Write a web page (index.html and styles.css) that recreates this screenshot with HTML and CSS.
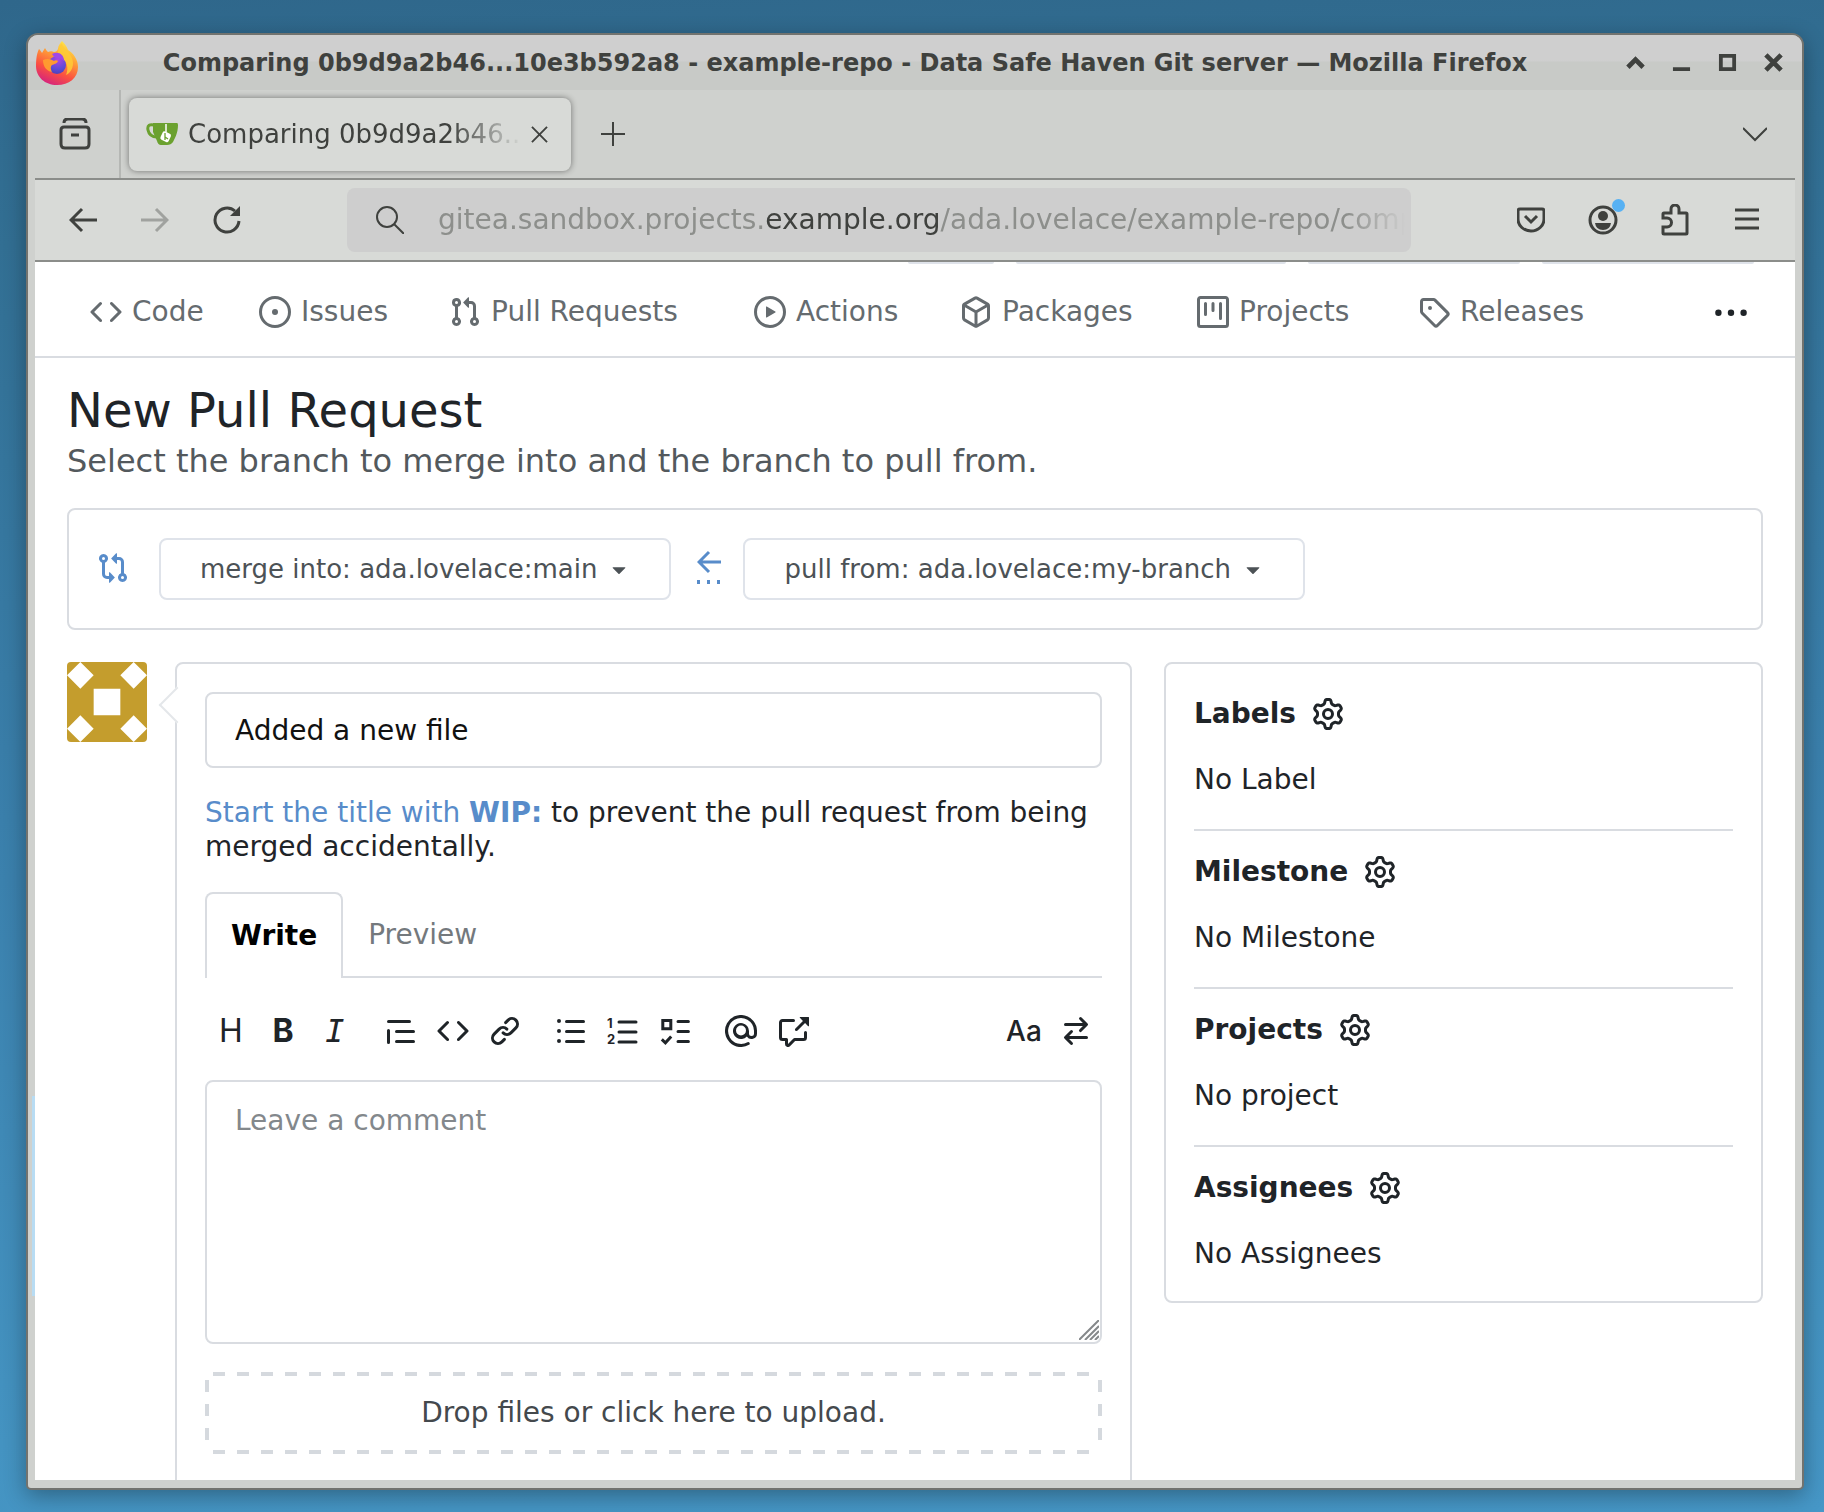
FILE: index.html
```html
<!DOCTYPE html>
<html lang="en">
<head>
<meta charset="utf-8">
<title>Comparing 0b9d9a2b46...10e3b592a8 - example-repo - Data Safe Haven Git server</title>
<link rel="stylesheet" href="styles.css">
</head>
<body>
<svg class="sprite" aria-hidden="true">
  <symbol id="code" viewBox="0 0 16 16"><path d="m11.28 3.22 4.25 4.25a.75.75 0 0 1 0 1.06l-4.25 4.25a.749.749 0 0 1-1.275-.326.749.749 0 0 1 .215-.734L13.94 8l-3.72-3.72a.749.749 0 0 1 .326-1.275.749.749 0 0 1 .734.215Zm-6.56 0a.751.751 0 0 1 1.042.018.751.751 0 0 1 .018 1.042L2.06 8l3.72 3.72a.749.749 0 0 1-.326 1.275.749.749 0 0 1-.734-.215L.47 8.53a.75.75 0 0 1 0-1.06Z"/></symbol>
  <symbol id="issue" viewBox="0 0 16 16"><path d="M8 9.5a1.5 1.5 0 1 0 0-3 1.5 1.5 0 0 0 0 3Z"/><path d="M8 0a8 8 0 1 1 0 16A8 8 0 0 1 8 0ZM1.5 8a6.5 6.5 0 1 0 13 0 6.5 6.5 0 0 0-13 0Z"/></symbol>
  <symbol id="pull" viewBox="0 0 16 16"><path d="M1.5 3.25a2.25 2.25 0 1 1 3 2.122v5.256a2.251 2.251 0 1 1-1.5 0V5.372A2.25 2.25 0 0 1 1.5 3.25Zm5.677-.177L9.573.677A.25.25 0 0 1 10 .854V2.5h1A2.5 2.5 0 0 1 13.5 5v5.628a2.251 2.251 0 1 1-1.5 0V5a1 1 0 0 0-1-1h-1v1.646a.25.25 0 0 1-.427.177L7.177 3.427a.25.25 0 0 1 0-.354ZM3.75 2.5a.75.75 0 1 0 0 1.5.75.75 0 0 0 0-1.5Zm0 9.5a.75.75 0 1 0 0 1.5.75.75 0 0 0 0-1.5Zm8.25.75a.75.75 0 1 0 1.5 0 .75.75 0 0 0-1.5 0Z"/></symbol>
  <symbol id="play" viewBox="0 0 16 16"><path d="M8 0a8 8 0 1 1 0 16A8 8 0 0 1 8 0ZM1.5 8a6.5 6.5 0 1 0 13 0 6.5 6.5 0 0 0-13 0Zm4.879-2.773 4.264 2.559a.25.25 0 0 1 0 .428l-4.264 2.559A.25.25 0 0 1 6 10.559V5.442a.25.25 0 0 1 .379-.215Z"/></symbol>
  <symbol id="package" viewBox="0 0 16 16"><path d="m8.878.392 5.25 3.045c.54.314.872.89.872 1.514v6.098a1.75 1.75 0 0 1-.872 1.514l-5.25 3.045a1.75 1.75 0 0 1-1.756 0l-5.25-3.045A1.75 1.75 0 0 1 1 11.049V4.951c0-.624.332-1.201.872-1.514L7.122.392a1.75 1.75 0 0 1 1.756 0ZM7.875 1.69l-4.63 2.685L8 7.133l4.755-2.758-4.63-2.685a.248.248 0 0 0-.25 0ZM2.5 5.677v5.372c0 .09.047.171.125.216l4.625 2.683V8.432Zm6.25 8.271 4.625-2.683a.25.25 0 0 0 .125-.216V5.677L8.75 8.432Z"/></symbol>
  <symbol id="project" viewBox="0 0 16 16"><path d="M1.75 0h12.5C15.216 0 16 .784 16 1.75v12.5A1.75 1.75 0 0 1 14.25 16H1.75A1.75 1.75 0 0 1 0 14.25V1.75C0 .784.784 0 1.75 0ZM1.5 1.75v12.5c0 .138.112.25.25.25h12.5a.25.25 0 0 0 .25-.25V1.75a.25.25 0 0 0-.25-.25H1.75a.25.25 0 0 0-.25.25ZM11.75 3a.75.75 0 0 1 .75.75v7.5a.75.75 0 0 1-1.5 0v-7.5a.75.75 0 0 1 .75-.75Zm-8.25.75a.75.75 0 0 1 1.5 0v5.5a.75.75 0 0 1-1.5 0ZM8 3a.75.75 0 0 1 .75.75v3.5a.75.75 0 0 1-1.5 0v-3.5A.75.75 0 0 1 8 3Z"/></symbol>
  <symbol id="tag" viewBox="0 0 16 16"><path d="M1 7.775V2.75C1 1.784 1.784 1 2.75 1h5.025c.464 0 .91.184 1.238.513l6.25 6.25a1.75 1.75 0 0 1 0 2.474l-5.026 5.026a1.75 1.75 0 0 1-2.474 0l-6.25-6.25A1.752 1.752 0 0 1 1 7.775Zm1.5 0c0 .066.026.13.073.177l6.25 6.25a.25.25 0 0 0 .354 0l5.025-5.025a.25.25 0 0 0 0-.354l-6.25-6.25a.25.25 0 0 0-.177-.073H2.75a.25.25 0 0 0-.25.25ZM6 5a1 1 0 1 1 0 2 1 1 0 0 1 0-2Z"/></symbol>
  <symbol id="dots" viewBox="0 0 16 16"><circle cx="1.7" cy="8.4" r="1.6"/><circle cx="8" cy="8.4" r="1.6"/><circle cx="14.3" cy="8.4" r="1.6"/></symbol>
  <symbol id="gear" viewBox="0 0 16 16"><path d="M8 0a8.2 8.2 0 0 1 .701.031C9.444.095 9.99.645 10.16 1.29l.288 1.107c.018.066.079.158.212.224.231.114.454.243.668.386.123.082.233.09.299.071l1.103-.303c.644-.176 1.392.021 1.82.63.27.385.506.792.704 1.218.315.675.111 1.422-.364 1.891l-.814.806c-.049.048-.098.147-.088.294.016.257.016.515 0 .772-.01.147.038.246.088.294l.814.806c.475.469.679 1.216.364 1.891a7.977 7.977 0 0 1-.704 1.217c-.428.61-1.176.807-1.82.63l-1.102-.302c-.067-.019-.177-.011-.3.071a5.909 5.909 0 0 1-.668.386c-.133.066-.194.158-.211.224l-.29 1.106c-.168.646-.715 1.196-1.458 1.26a8.006 8.006 0 0 1-1.402 0c-.743-.064-1.289-.614-1.458-1.26l-.289-1.106c-.018-.066-.079-.158-.212-.224a5.738 5.738 0 0 1-.668-.386c-.123-.082-.233-.09-.299-.071l-1.103.303c-.644.176-1.392-.021-1.82-.63a8.12 8.12 0 0 1-.704-1.218c-.315-.675-.111-1.422.363-1.891l.815-.806c.05-.048.098-.147.088-.294a6.214 6.214 0 0 1 0-.772c.01-.147-.038-.246-.088-.294l-.815-.806C.635 6.045.431 5.298.746 4.623a7.92 7.92 0 0 1 .704-1.217c.428-.61 1.176-.807 1.82-.63l1.102.302c.067.019.177.011.3-.071.214-.143.437-.272.668-.386.133-.066.194-.158.211-.224l.29-1.106C6.009.645 6.556.095 7.299.03 7.53.01 7.764 0 8 0Zm-.571 1.525c-.036.003-.108.036-.137.146l-.289 1.105c-.147.561-.549.967-.998 1.189-.173.086-.34.183-.5.29-.417.278-.97.423-1.529.27l-1.103-.303c-.109-.03-.175.016-.195.045-.22.312-.412.644-.573.99-.014.031-.021.11.059.19l.815.806c.411.406.562.957.53 1.456a4.709 4.709 0 0 0 0 .582c.032.499-.119 1.05-.53 1.456l-.815.806c-.081.08-.073.159-.059.19.162.346.353.677.573.989.02.03.085.076.195.046l1.102-.303c.56-.153 1.113-.008 1.53.27.161.107.328.204.501.29.447.222.85.629.997 1.189l.289 1.105c.029.109.101.143.137.146a6.6 6.6 0 0 0 1.142 0c.036-.003.108-.036.137-.146l.289-1.105c.147-.561.549-.967.998-1.189.173-.086.34-.183.5-.29.417-.278.97-.423 1.529-.27l1.103.303c.109.029.175-.016.195-.045.22-.313.411-.644.573-.99.014-.031.021-.11-.059-.19l-.815-.806c-.411-.406-.562-.957-.53-1.456a4.709 4.709 0 0 0 0-.582c-.032-.499.119-1.05.53-1.456l.815-.806c.081-.08.073-.159.059-.19a6.464 6.464 0 0 0-.573-.989c-.02-.03-.085-.076-.195-.046l-1.102.303c-.56.153-1.113.008-1.53-.27a4.44 4.44 0 0 0-.501-.29c-.447-.222-.85-.629-.997-1.189l-.289-1.105c-.029-.11-.101-.143-.137-.146a6.6 6.6 0 0 0-1.142 0ZM11 8a3 3 0 1 1-6 0 3 3 0 0 1 6 0ZM9.5 8a1.5 1.5 0 1 0-3.001.001A1.5 1.5 0 0 0 9.5 8Z"/></symbol>
  <symbol id="compare" viewBox="0 0 16 16"><path d="M9.573.677A.25.25 0 0 1 10 .854V2.5h1A2.5 2.5 0 0 1 13.5 5v5.628a2.251 2.251 0 1 1-1.5 0V5a1 1 0 0 0-1-1h-1v1.646a.25.25 0 0 1-.427.177L7.177 3.427a.25.25 0 0 1 0-.354ZM6 12v-1.646a.25.25 0 0 1 .427-.177l2.396 2.396a.25.25 0 0 1 0 .354l-2.396 2.396A.25.25 0 0 1 6 15.146V13.5H5A2.5 2.5 0 0 1 2.5 11V5.372a2.25 2.25 0 1 1 1.5 0V11a1 1 0 0 0 1 1ZM4 3.25a.75.75 0 1 0-1.5 0 .75.75 0 0 0 1.5 0ZM12.75 12a.75.75 0 1 0 0 1.5.75.75 0 0 0 0-1.5Z"/></symbol>
  <symbol id="triangle" viewBox="0 0 16 16"><path d="m4.427 7.427 3.396 3.396a.25.25 0 0 0 .354 0l3.396-3.396A.25.25 0 0 0 11.396 7H4.604a.25.25 0 0 0-.177.427Z"/></symbol>
  <symbol id="quote" viewBox="0 0 16 16"><path d="M1.75 2.5h10.5a.75.75 0 0 1 0 1.5H1.75a.75.75 0 0 1 0-1.5Zm4 5h8.5a.75.75 0 0 1 0 1.5h-8.5a.75.75 0 0 1 0-1.5Zm0 5h8.5a.75.75 0 0 1 0 1.5h-8.5a.75.75 0 0 1 0-1.5ZM2.5 7.75v6a.75.75 0 0 1-1.5 0v-6a.75.75 0 0 1 1.5 0Z"/></symbol>
  <symbol id="link" viewBox="0 0 16 16"><path d="m7.775 3.275 1.25-1.25a3.5 3.5 0 1 1 4.95 4.95l-2.5 2.5a3.5 3.5 0 0 1-4.95 0 .751.751 0 0 1 .018-1.042.751.751 0 0 1 1.042-.018 1.998 1.998 0 0 0 2.83 0l2.5-2.5a2.002 2.002 0 0 0-2.83-2.83l-1.25 1.25a.751.751 0 0 1-1.042-.018.751.751 0 0 1-.018-1.042Zm-4.69 9.64a1.998 1.998 0 0 0 2.83 0l1.25-1.25a.751.751 0 0 1 1.042.018.751.751 0 0 1 .018 1.042l-1.25 1.25a3.5 3.5 0 1 1-4.95-4.95l2.5-2.5a3.5 3.5 0 0 1 4.95 0 .751.751 0 0 1-.018 1.042.751.751 0 0 1-1.042.018 1.998 1.998 0 0 0-2.83 0l-2.5 2.5a1.998 1.998 0 0 0 0 2.83Z"/></symbol>
  <symbol id="bullets" viewBox="0 0 16 16"><path d="M5.75 2.5h8.5a.75.75 0 0 1 0 1.5h-8.5a.75.75 0 0 1 0-1.5Zm0 5h8.5a.75.75 0 0 1 0 1.5h-8.5a.75.75 0 0 1 0-1.5Zm0 5h8.5a.75.75 0 0 1 0 1.5h-8.5a.75.75 0 0 1 0-1.5ZM2 14a1 1 0 1 1 0-2 1 1 0 0 1 0 2Zm1-6a1 1 0 1 1-2 0 1 1 0 0 1 2 0ZM2 4a1 1 0 1 1 0-2 1 1 0 0 1 0 2Z"/></symbol>
  <symbol id="tasks" viewBox="0 0 16 16"><path d="M9.5 3.25h5.2M9.5 8.25h5.2M9.5 13.25h5.2" fill="none" stroke="currentColor" stroke-width="1.5" stroke-linecap="round"/><path d="M1.9 2.7h4v4.2h-4zM1.4 12.2l1.8 1.7 2.9-3.2" fill="none" stroke="currentColor" stroke-width="1.5"/></symbol>
  <symbol id="mention" viewBox="0 0 16 16"><path d="M4.75 2.37a6.501 6.501 0 0 0 6.5 11.26.75.75 0 0 1 .75 1.298A7.999 7.999 0 0 1 .989 4.148 8 8 0 0 1 16 7.75v1.5a2.75 2.75 0 0 1-5.072 1.475 3.999 3.999 0 0 1-6.65-4.19A4 4 0 0 1 12 8v1.25a1.25 1.25 0 0 0 2.5 0V7.867a6.5 6.5 0 0 0-9.75-5.496V2.37ZM10.5 7.75a2.5 2.5 0 1 0-5 0 2.5 2.5 0 0 0 5 0Z"/></symbol>
  <symbol id="reference" viewBox="0 0 16 16"><path d="M2.75 3.5a.25.25 0 0 0-.25.25v7.5c0 .138.112.25.25.25h2a.75.75 0 0 1 .75.75v2.19l2.72-2.72a.749.749 0 0 1 .53-.22h4.5a.25.25 0 0 0 .25-.25v-2.5a.75.75 0 0 1 1.5 0v2.5A1.75 1.75 0 0 1 13.25 13H9.06l-2.573 2.573A1.458 1.458 0 0 1 4 14.543V13H2.75A1.75 1.75 0 0 1 1 11.25v-7.5C1 2.784 1.784 2 2.75 2h5.5a.75.75 0 0 1 0 1.5ZM16 1.25v4.146a.25.25 0 0 1-.427.177L14.03 4.03l-3.75 3.75a.749.749 0 0 1-1.275-.326.749.749 0 0 1 .215-.734l3.75-3.75-1.543-1.543A.25.25 0 0 1 11.604 1h4.146a.25.25 0 0 1 .25.25Z"/></symbol>
  <symbol id="switch" viewBox="0 0 16 16"><path d="M5.22 14.78a.75.75 0 0 0 1.06-1.06L4.56 12h8.69a.75.75 0 0 0 0-1.5H4.56l1.72-1.72a.75.75 0 0 0-1.06-1.06l-3 3a.75.75 0 0 0 0 1.06l3 3Zm5.56-6.5a.75.75 0 1 1-1.06-1.06l1.72-1.72H2.75a.75.75 0 0 1 0-1.5h8.69L9.72 2.28a.75.75 0 0 1 1.06-1.06l3 3a.75.75 0 0 1 0 1.06l-3 3Z"/></symbol>
</svg>

<div class="window">
  <header class="titlebar">
    <svg class="firefox" viewBox="0 0 42 44" aria-hidden="true">
      <defs>
        <linearGradient id="flame" x1="0.8" y1="0" x2="0.35" y2="1"><stop offset="0" stop-color="#fff44f"/><stop offset=".35" stop-color="#ffa436"/><stop offset=".7" stop-color="#fb5140"/><stop offset="1" stop-color="#d6247c"/></linearGradient>
        <radialGradient id="globe" cx=".55" cy=".2" r=".9"><stop offset="0" stop-color="#b045e0"/><stop offset=".6" stop-color="#5b4bd8"/><stop offset="1" stop-color="#4a3fae"/></radialGradient>
      </defs>
      <path fill="url(#flame)" d="M26 0c3 3 5 6 6 9 5 3 10 9 10 17 0 11-9 18-21 18S0 36 0 25c0-8 1-13 3-17 1 1 2 2 3 4 1-2 2-3 3-5 1 2 2 3 3 4 2-1 4-1 6 0 2 0 3-1 4-3C22 5 24 2 26 0Z"/>
      <path fill="#ffcb36" opacity=".85" d="M26 2c0 6 11 10 11 20 0 6-3 10-7 12 3-7 1-14-5-17-4-2-4-10 1-15Z"/>
      <circle cx="21" cy="24" r="9" fill="url(#globe)"/>
      <path fill="#ff9a30" d="M7 19c4-2 8-1 11 1 1-1 3-1 4 0-1 3-4 3-6 4-2 2-1 5 0 7-6-1-9-6-9-12Z"/>
      <path fill="#a148e6" d="M16 13c6-3 12 0 12 7-3-2-4-3-7-3-2 0-4-2-5-4Z"/>
    </svg>
    <div class="title">Comparing 0b9d9a2b46...10e3b592a8 - example-repo - Data Safe Haven Git server — Mozilla Firefox</div>
    <div class="window-controls">
      <button aria-label="Shade"><svg viewBox="0 0 20 20"><path d="M2 15l8-8 8 8" stroke-width="5"/></svg></button>
      <button aria-label="Minimize"><svg viewBox="0 0 20 20"><path d="M1 17h18" stroke-width="4"/></svg></button>
      <button aria-label="Maximize"><svg viewBox="0 0 20 20"><path d="M3 3h14v14H3z" stroke-width="4"/></svg></button>
      <button aria-label="Close"><svg viewBox="0 0 20 20"><path d="M2 2l16 16M18 2L2 18" stroke-width="5"/></svg></button>
    </div>
  </header>

  <div class="tabstrip">
    <button class="recent" aria-label="Firefox View"><svg viewBox="0 0 32 32"><path d="M5 5q0-4 4-4h14q4 0 4 4M5 9h22q3 0 3 3v14q0 4-4 4H6q-4 0-4-4V12q0-3 3-3ZM12 17h8"/></svg></button>
    <div class="tab">
      <svg class="favicon" viewBox="0 0 32 24" aria-hidden="true"><path fill="none" stroke="#6ba12f" stroke-width="3" d="M8 3C4 2 1 3 2 8s4 7 9 7"/><path fill="#6ba12f" d="M7 1h24q1 0 1 2c0 8-3 13-5 17q-2 3-6 3h-6q-3 0-4-4L7 10Z"/><path stroke="#fff" stroke-width="1.5" d="M20 2v8"/><rect x="15" y="10" width="9" height="9" rx="2" fill="#fff" transform="rotate(25 19 15)"/><path d="M19 11v4l3 2M19 15v3" fill="none" stroke="#6ba12f" stroke-width="1.3"/></svg>
      <span class="tab-label">Comparing 0b9d9a2b46...</span>
      <button class="tab-close" aria-label="Close tab"><svg viewBox="0 0 18 18"><path d="M1 1l16 16M17 1L1 17"/></svg></button>
    </div>
    <button class="new-tab" aria-label="New tab"><svg viewBox="0 0 24 24"><path d="M12 0v24M0 12h24"/></svg></button>
    <button class="all-tabs" aria-label="List all tabs"><svg viewBox="0 0 24 24"><path d="M0 6l12 12L24 6"/></svg></button>
  </div>

  <div class="toolbar">
    <button class="tool" aria-label="Back"><svg viewBox="0 0 28 28"><path d="M28 14H2M13 3L2 14l11 11" stroke-width="3"/></svg></button>
    <button class="tool" aria-label="Forward" disabled><svg viewBox="0 0 28 28"><path d="M0 14h26M15 3l11 11-11 11" stroke-width="3"/></svg></button>
    <button class="tool" aria-label="Reload"><svg viewBox="0 0 28 28"><path d="M26 15A12 12 0 1 1 22 5" stroke-width="3"/><path d="M27 0v10H17z" fill="currentColor" stroke="none"/></svg></button>
    <div class="urlbar">
      <svg viewBox="0 0 28 28" aria-hidden="true"><circle cx="11" cy="11" r="10"/><path d="M18 18l10 10"/></svg>
      <div class="url" role="textbox" aria-label="Address" contenteditable="true" spellcheck="false">gitea.sandbox.projects.<b>example.org</b>/ada.lovelace/example-repo/compare</div>
    </div>
    <button class="tool" aria-label="Save to Pocket"><svg viewBox="0 0 28 28"><path d="M3 3h22q2 0 2 2v8a13 12 0 0 1-26 0V5q0-2 2-2ZM8 10l6 6 6-6" stroke-width="3"/></svg></button>
    <button class="tool account" aria-label="Account"><svg viewBox="0 0 30 30"><circle cx="15" cy="15" r="13" stroke-width="3"/><circle cx="15" cy="11" r="5" fill="currentColor" stroke="none"/><path d="M7 18h16q-1 7-8 7t-8-7Z" fill="currentColor" stroke="none"/></svg></button>
    <button class="tool" aria-label="Extensions"><svg class="puzzle" viewBox="0 0 28 32"><path d="M2 14V10q0-1 1-1h7V5a4 4 0 0 1 8 0v4h7q1 0 1 1v19q0 1-1 1H3q-1 0-1-1v-6h4a4 4 0 0 0 0-9Z" stroke-width="3"/></svg></button>
    <button class="tool" aria-label="Menu"><svg viewBox="0 0 28 28"><path d="M2 4h24M2 13h24M2 22h24" stroke-width="3"/></svg></button>
  </div>

  <div class="viewport">
    <div class="scrolled-row" aria-hidden="true"><span class="w1"></span><span class="w2"></span><span class="w3"></span><span class="w3"></span></div>
    <nav class="repo-nav" aria-label="Repository">
      <a href="#code"><svg><use href="#code"/></svg>Code</a>
      <a href="#issues"><svg><use href="#issue"/></svg>Issues</a>
      <a href="#pulls"><svg><use href="#pull"/></svg>Pull Requests</a>
      <a href="#actions"><svg><use href="#play"/></svg>Actions</a>
      <a href="#packages"><svg><use href="#package"/></svg>Packages</a>
      <a href="#projects"><svg><use href="#project"/></svg>Projects</a>
      <a href="#releases"><svg><use href="#tag"/></svg>Releases</a>
      <button aria-label="More"><svg><use href="#dots"/></svg></button>
    </nav>

    <main class="page">
      <h1>New Pull Request</h1>
      <p class="lead">Select the branch to merge into and the branch to pull from.</p>

      <section class="branches" aria-label="Branches">
        <svg class="icon"><use href="#compare"/></svg>
        <button class="branch">merge into: ada.lovelace:main<svg><use href="#triangle"/></svg></button>
        <svg class="direction" viewBox="0 0 24 34" aria-hidden="true"><path d="M24 12H3M12 2L2 12l10 10" fill="none" stroke="currentColor" stroke-width="3"/><path d="M0 30h3v4H0zM10 30h3v4h-3zM20 30h3v4h-3z"/></svg>
        <button class="branch">pull from: ada.lovelace:my-branch<svg><use href="#triangle"/></svg></button>
      </section>

      <div class="columns">
        <svg class="avatar" viewBox="0 0 60 60" role="img" aria-label="ada.lovelace"><rect width="60" height="60" rx="3" fill="#c49d2d"/><path fill="#fff" d="M10 0l10 10-10 10L0 10zM50 0l10 10-10 10-10-10zM10 40l10 10-10 10L0 50zM50 40l10 10-10 10-10-10zM20 20h20v20H20z"/></svg>

        <form class="comment">
          <input class="field" type="text" aria-label="Title" value="Added a new file">
          <p class="hint"><a href="#wip">Start the title with <strong>WIP:</strong></a> to prevent the pull request from being merged accidentally.</p>
          <div class="editor-tabs" role="tablist">
            <button type="button" role="tab" aria-selected="true">Write</button>
            <button type="button" role="tab" aria-selected="false">Preview</button>
          </div>
          <div class="editor-bar">
            <div class="group">
              <button type="button" class="letter" aria-label="Heading">H</button>
              <button type="button" class="letter bold" aria-label="Bold">B</button>
              <button type="button" class="letter italic" aria-label="Italic">I</button>
            </div>
            <div class="group">
              <button type="button" aria-label="Quote"><svg><use href="#quote"/></svg></button>
              <button type="button" aria-label="Code"><svg><use href="#code"/></svg></button>
              <button type="button" aria-label="Link"><svg><use href="#link"/></svg></button>
            </div>
            <div class="group">
              <button type="button" aria-label="Bulleted list"><svg><use href="#bullets"/></svg></button>
              <button type="button" aria-label="Numbered list"><svg viewBox="0 0 32 32"><path d="M12 7h17M12 17h17M12 27h17" stroke="currentColor" stroke-width="3" stroke-linecap="round"/><text x="0" y="13">1</text><text x="0" y="29">2</text></svg></button>
              <button type="button" aria-label="Task list"><svg><use href="#tasks"/></svg></button>
            </div>
            <div class="group">
              <button type="button" aria-label="Mention"><svg><use href="#mention"/></svg></button>
              <button type="button" aria-label="Reference"><svg><use href="#reference"/></svg></button>
            </div>
            <div class="group last">
              <button type="button" class="letter small" aria-label="Monospace">Aa</button>
              <button type="button" aria-label="Switch editor"><svg><use href="#switch"/></svg></button>
            </div>
          </div>
          <div class="comment-text">
            <textarea class="field" aria-label="Comment" placeholder="Leave a comment"></textarea>
            <svg class="grip" viewBox="0 0 20 20" aria-hidden="true"><path d="M0 20L20 0M6 20L20 6M11 20l9-9M16 20l4-4"/></svg>
          </div>
          <button type="button" class="dropzone">Drop files or click here to upload.</button>
        </form>

        <aside class="sidebar">
          <section><h2>Labels <button aria-label="Edit labels"><svg><use href="#gear"/></svg></button></h2><p>No Label</p></section>
          <section><h2>Milestone <button aria-label="Edit milestone"><svg><use href="#gear"/></svg></button></h2><p>No Milestone</p></section>
          <section><h2>Projects <button aria-label="Edit projects"><svg><use href="#gear"/></svg></button></h2><p>No project</p></section>
          <section><h2>Assignees <button aria-label="Edit assignees"><svg><use href="#gear"/></svg></button></h2><p>No Assignees</p></section>
        </aside>
      </div>
    </main>
  </div>
</div>
</body>
</html>
```

FILE: styles.css
```css
* { box-sizing: border-box; }

:root {
  --frame: #cfd1ce;
  --chrome: #d8dad7;
  --ink: #3f413e;
  --line: #d9dce1;
  --text: #1f2428;
  --muted: #656b6f;
  --blue: #588cca;
}

body {
  margin: 0;
  height: 100vh;
  padding: 33px 20px 22px 26px;
  overflow: hidden;
  background: linear-gradient(176deg, #2f678b 0%, #326f93 15%, #3a7fab 50%, #4493c1 88%, #4697c7 100%);
  font: 28px/34px "DejaVu Sans", sans-serif;
  color: var(--text);
}

button, input, textarea { font: inherit; color: inherit; }
button { padding: 0; border: 0; background: none; display: inline-flex; align-items: center; justify-content: center; }
h1, h2, p { margin: 0; font-size: inherit; }
a { color: inherit; text-decoration: none; }
svg { display: block; flex: none; width: 32px; height: 32px; fill: currentColor; }
.sprite { position: absolute; width: 0; height: 0; }

/* Window frame */
.window {
  position: relative;
  height: 100%;
  display: flex;
  flex-direction: column;
  overflow: hidden;
  border: 2px solid #72736f;
  border-radius: 12px 12px 5px 5px;
  background: var(--frame);
  padding: 0 7px 8px;
  box-shadow: 0 6px 22px rgba(0, 0, 0, .32);
}

/* Sliver of the desktop panel showing along the frame */
.window::after {
  content: "";
  position: absolute;
  left: 4px;
  top: 73%;
  width: 3px;
  height: 200px;
  background: #b8dcf3;
}

.titlebar {
  flex: none;
  height: 55px;
  margin: 0 -7px;
  padding: 0 14px 0 8px;
  display: flex;
  align-items: center;
  background: linear-gradient(#cfcfcf 0 46%, #c8cac7 50%);
  color: var(--ink);
}
.firefox { width: 42px; height: 44px; }
.title { flex: 1; padding-left: 4px; text-align: center; font-size: 24px; font-weight: bold; white-space: nowrap; overflow: hidden; }
.window-controls { display: flex; gap: 16px; padding-left: 12px; }
.window-controls button { width: 30px; }
.window-controls svg { width: 19px; height: 19px; fill: none; stroke: currentColor; }

/* Tabs */
.tabstrip {
  flex: none;
  height: 90px;
  display: flex;
  align-items: center;
  border-bottom: 2px solid #8b8d8a;
  color: var(--ink);
}
.tabstrip svg, .toolbar svg { fill: none; stroke: currentColor; stroke-width: 2; }
.recent { width: 86px; height: 88px; padding-right: 28px; border-right: 2px solid #b5b7b4; justify-content: flex-end; }
.recent svg { stroke-width: 3; }
.tab {
  width: 442px;
  height: 73px;
  margin-left: 8px;
  padding: 0 23px 0 17px;
  display: flex;
  align-items: center;
  border-radius: 8px;
  background: var(--chrome);
  box-shadow: 0 0 6px rgba(0, 0, 0, .45);
}
.tab svg.favicon { width: 32px; height: 24px; stroke: none; }
.tab-label {
  flex: 1;
  margin-left: 10px;
  overflow: hidden;
  white-space: nowrap;
  font-size: 26px;
  mask-image: linear-gradient(90deg, #000 78%, transparent 100%);
}
.tab-close { margin-left: 8px; }
.tab-close svg { width: 17px; height: 17px; }
.new-tab { margin-left: 30px; }
.new-tab svg, .all-tabs svg { width: 24px; height: 24px; }
.all-tabs { margin-left: auto; margin-right: 28px; }

/* Navigation toolbar */
.toolbar {
  flex: none;
  height: 82px;
  padding: 0 12px;
  display: flex;
  align-items: center;
  background: var(--chrome);
  border-bottom: 2px solid #8b8d8a;
  color: var(--ink);
}
.tool { width: 72px; height: 72px; }
.tool svg { width: 28px; height: 28px; }
.tool:disabled { color: #a0a29f; }
.account { position: relative; }
.account svg { width: 30px; height: 30px; }
.account::after { content: ""; position: absolute; right: 14px; top: 15px; width: 13px; height: 13px; border-radius: 50%; background: #57b1f3; }
.tool .puzzle { height: 32px; }
.urlbar {
  flex: 1;
  min-width: 0;
  height: 64px;
  margin: 0 84px;
  padding: 0 6px 0 29px;
  display: flex;
  align-items: center;
  border-radius: 8px;
  background: #cecece;
}
.urlbar svg { width: 28px; height: 28px; }
.url {
  flex: 1;
  margin-left: 34px;
  overflow: hidden;
  white-space: nowrap;
  color: #8d8f8c;
  mask-image: linear-gradient(90deg, #000 94%, transparent 100%);
}
.url b { font-weight: normal; color: var(--ink); }

/* Page */
.viewport { flex: 1; min-height: 0; overflow: hidden; background: #fff; }
.scrolled-row { height: 2px; display: flex; justify-content: flex-end; gap: 22px; padding-right: 41px; }
.scrolled-row span { border-radius: 0 0 4px 4px; background: #dfe3ea; }
.w1 { width: 86px; }
.w2 { width: 270px; }
.w3 { width: 212px; }

.repo-nav {
  height: 94px;
  padding: 3px 48px 0 55px;
  display: grid;
  grid-template-columns: 169px 190px 305px 206px 237px 221px 1fr auto;
  align-items: center;
  border-bottom: 2px solid var(--line);
  color: var(--muted);
}
.repo-nav a { display: flex; align-items: center; gap: 10px; white-space: nowrap; }
.repo-nav button { color: var(--text); }

.page { padding: 24px 32px 0; }
h1 { font-size: 48px; line-height: 56px; font-weight: normal; }
.lead { margin-top: 4px; font-size: 32px; line-height: 38px; color: #53595d; }

.branches {
  margin-top: 28px;
  padding: 28px;
  height: 122px;
  display: flex;
  align-items: flex-start;
  border: 2px solid var(--line);
  border-radius: 8px;
  color: var(--blue);
}
.branches .icon { margin: 14px 30px 0 0; }
.direction { width: 24px; height: 34px; margin: 12px 22px 0 26px; }
.branch {
  height: 62px;
  padding: 0 36px 0 39px;
  gap: 8px;
  border: 2px solid #dfe3ea;
  border-radius: 8px;
  font-size: 26px;
  color: #4c5256;
  white-space: nowrap;
}
.branch svg { width: 28px; height: 28px; }

.columns { margin-top: 32px; display: flex; align-items: flex-start; }
.avatar { width: 80px; height: 80px; margin-right: 28px; }

.comment {
  position: relative;
  flex: 1;
  min-width: 0;
  padding: 28px 28px 90px;
  display: flex;
  flex-direction: column;
  gap: 28px;
  border: 2px solid var(--line);
  border-radius: 8px;
}
.comment::before {
  content: "";
  position: absolute;
  left: -13px;
  top: 28px;
  width: 24px;
  height: 24px;
  transform: rotate(45deg);
  border: solid #e4e7ea;
  border-width: 0 0 2px 2px;
  background: #fff;
}
.field { display: block; width: 100%; padding: 0 28px; border: 2px solid var(--line); border-radius: 8px; background: #fff; outline: 0; }
input.field { height: 76px; color: #111; }
.hint a { color: var(--blue); }

.editor-tabs { display: flex; height: 86px; }
.editor-tabs::after { content: ""; flex: 1; border-bottom: 2px solid var(--line); }
.editor-tabs button { padding: 2px 25px 0; border-bottom: 2px solid var(--line); color: #74797d; }
.editor-tabs [aria-selected="true"] { padding: 0 24px; border: 2px solid var(--line); border-bottom: 0; border-radius: 8px 8px 0 0; font-weight: bold; color: #000; }

.editor-bar { display: flex; gap: 14px; height: 46px; padding-top: 4px; }
.group { display: flex; }
.group button { width: 52px; height: 100%; }
.last { margin-left: auto; }
.letter { font-family: Inter, sans-serif; font-size: 32px; }
.bold { font-weight: bold; }
.italic { font-family: "DejaVu Sans Mono", monospace; font-style: italic; }
.small { font-size: 28px; font-weight: 500; }
.group text { font: bold 13px Inter, sans-serif; }

.comment-text { position: relative; }
textarea.field { height: 264px; padding-top: 22px; resize: none; }
.field::placeholder { color: #83888c; opacity: 1; }
.grip { position: absolute; right: 3px; bottom: 4px; width: 20px; height: 20px; fill: none; stroke: #85888a; stroke-width: 2; }

/* Long dashes along each edge */
.dropzone {
  --dash: #d5d9de 0 12px, transparent 12px 24px;
  height: 82px;
  color: #44494d;
  background:
    repeating-linear-gradient(90deg, var(--dash)) 8px 0 / calc(100% - 12px) 4px no-repeat,
    repeating-linear-gradient(90deg, var(--dash)) 8px 100% / calc(100% - 12px) 4px no-repeat,
    repeating-linear-gradient(180deg, var(--dash)) 0 8px / 4px calc(100% - 12px) no-repeat,
    repeating-linear-gradient(180deg, var(--dash)) 100% 8px / 4px calc(100% - 12px) no-repeat;
}

.sidebar { flex: none; width: 599px; margin-left: 32px; padding: 33px 28px 30px; border: 2px solid var(--line); border-radius: 8px; }
.sidebar section + section { margin-top: 32px; padding-top: 24px; border-top: 2px solid var(--line); }
.sidebar h2 { display: flex; align-items: center; gap: 16px; line-height: 34px; }
.sidebar p { margin-top: 32px; }
```
